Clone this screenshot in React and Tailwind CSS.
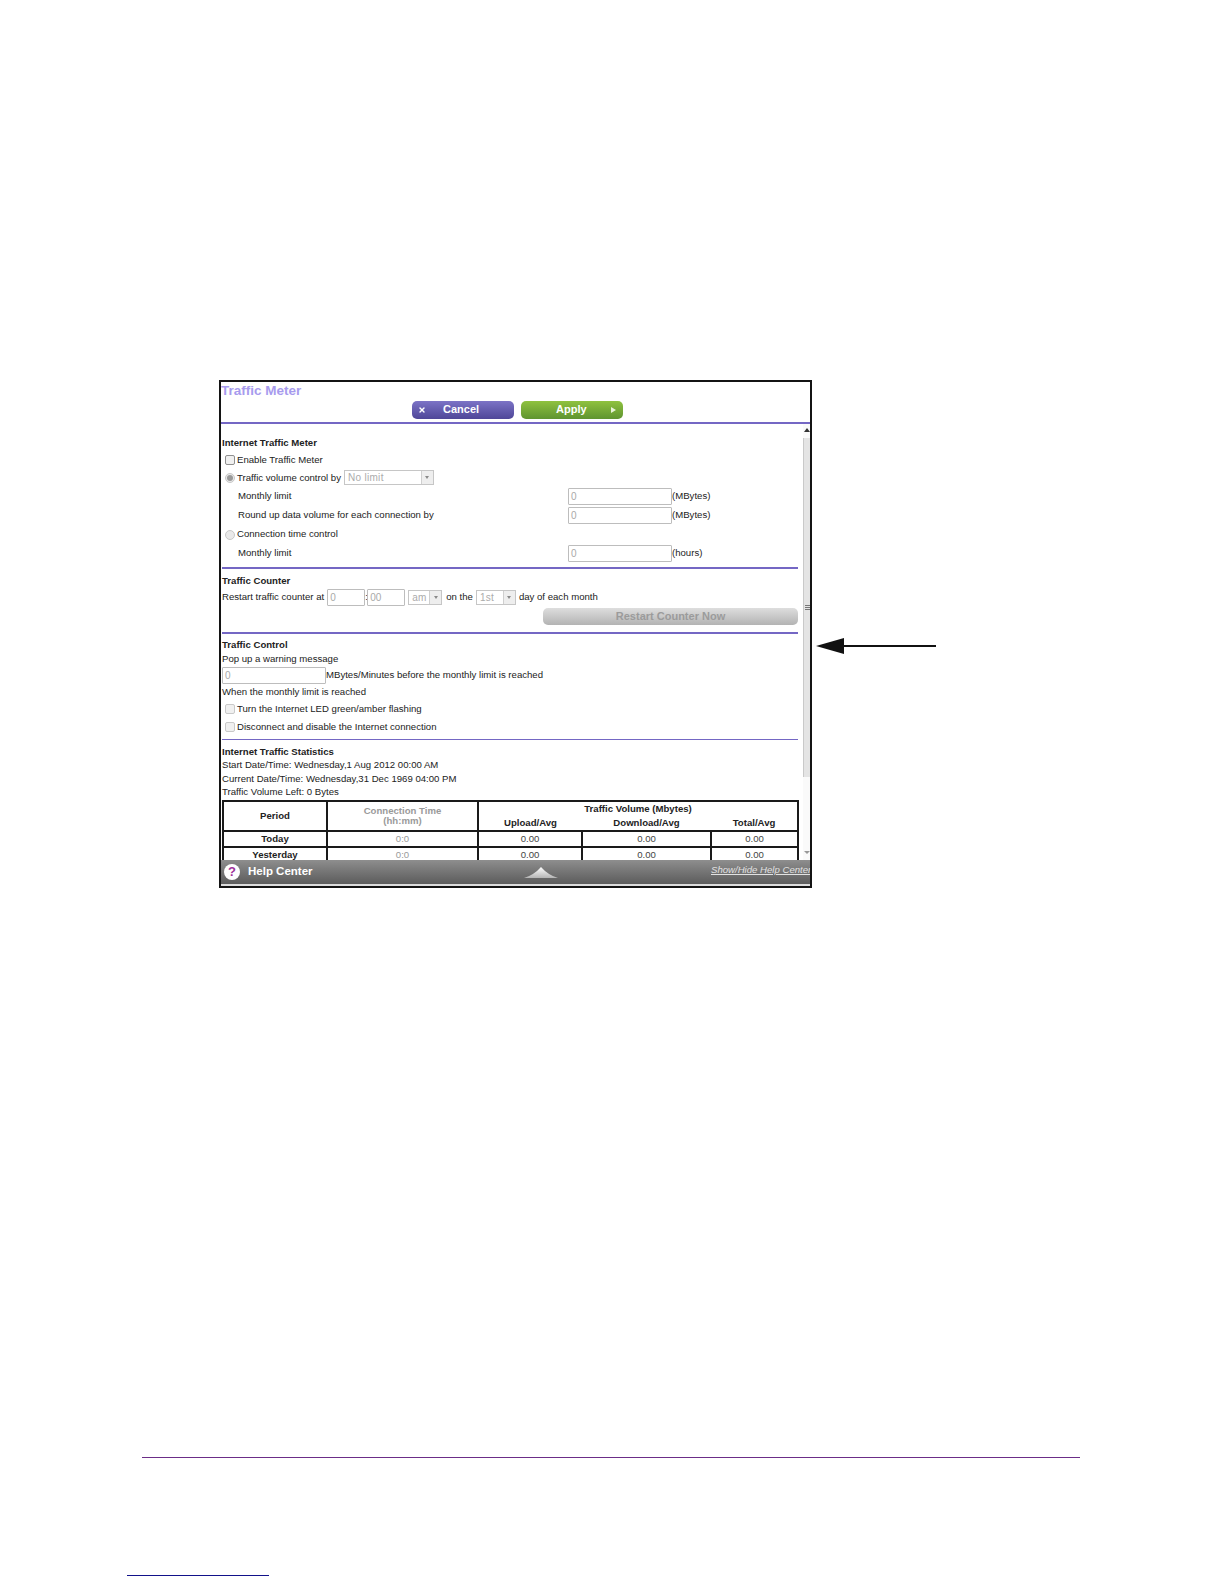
import React from "react";
import { X } from "lucide-react";

const font = "font-['Liberation_Sans',Arial,sans-serif]";

function Divider({ className = "h-[2px]" }) {
  return <div className={`bg-[#7467c4] mr-[5px] ${className}`} />;
}

function Check({ className = "border-[#c9c9c9]" }) {
  return <span className={`shrink-0 w-[10px] h-[10px] border rounded-[2px] bg-[#f0f0f0] ${className}`} />;
}

function Radio({ on }) {
  return (
    <span className="shrink-0 w-[10px] h-[10px] rounded-full border border-[#c8c8c8] bg-[#e9e9e9] flex items-center justify-center">
      {on && <span className="w-[6px] h-[6px] rounded-full bg-[#9a9a9a]" />}
    </span>
  );
}

function Field({ value = "0", className = "" }) {
  return (
    <span className={`shrink-0 h-[17px] border border-[#bdbdbd] rounded-[1px] pl-[2px] text-[10px] leading-[15px] text-[#a9a9a9] bg-white ${className}`}>
      {value}
    </span>
  );
}

function Select({ value, className = "" }) {
  return (
    <span className={`shrink-0 h-[15px] -mt-[1px] border border-[#c6c6c6] pl-[3px] flex items-center justify-between text-[10px] tracking-[0.3px] text-[#ababab] bg-white ${className}`}>
      {value}
      <span className="w-[12px] h-[13px] bg-[#eeeeee] border-l border-[#cfcfcf] flex items-center justify-center">
        <span className="border-x-[2.5px] border-x-transparent border-t-[3px] border-t-[#8a8a8a]" />
      </span>
    </span>
  );
}

function LimitRow({ label, unit, height }) {
  return (
    <div className={`flex items-center pl-[16px] ${height}`}>
      <span className="w-[330px]">{label}</span>
      <Field className="w-[104px]" />
      <span>{unit}</span>
    </div>
  );
}

function Cell({ children, className = "", ...props }) {
  return (
    <td {...props} className={`border-2 border-[#1a1a1a] p-0 text-center align-middle ${className}`}>
      {children}
    </td>
  );
}

function DataRow({ label }) {
  return (
    <tr className="h-[16px]">
      <Cell className="font-bold">{label}</Cell>
      <Cell className="text-[#9a9a9a]">0:0</Cell>
      <Cell className="text-[#444]">0.00</Cell>
      <Cell className="text-[#444]">0.00</Cell>
      <Cell className="text-[#444]">0.00</Cell>
    </tr>
  );
}

function Scrollbar() {
  return (
    <div className="w-[7px] shrink-0 flex flex-col items-center bg-[#fafafa]">
      <div className="h-[14px] w-full flex items-start justify-center pt-[4px]">
        <span className="border-x-[3px] border-x-transparent border-b-[4px] border-b-[#333]" />
      </div>
      <div className="w-full h-[339px] bg-[#e4e4e4] border-l border-[#c9c9c9] flex flex-col items-center justify-center gap-[1px]">
        <span className="w-[5px] h-px bg-[#777]" />
        <span className="w-[5px] h-px bg-[#777]" />
        <span className="w-[5px] h-px bg-[#777]" />
      </div>
      <div className="flex-1 w-full flex items-end justify-center pb-[6px]">
        <span className="border-x-[3px] border-x-transparent border-t-[3px] border-t-[#999]" />
      </div>
    </div>
  );
}

function Arrow() {
  return (
    <svg width="120" height="16" viewBox="0 0 120 16" className="shrink-0">
      <path d="M0 8 L28 0 V16 Z" fill="#111" />
      <rect x="27" y="7" width="93" height="2" fill="#111" />
    </svg>
  );
}

function Peak() {
  return (
    <svg width="34" height="11" viewBox="0 0 34 11" className="shrink-0">
      <defs>
        <linearGradient id="peak" x1="0" y1="0" x2="0" y2="1">
          <stop offset="0" stopColor="#ffffff" />
          <stop offset="1" stopColor="#b5b5b5" />
        </linearGradient>
      </defs>
      <path d="M0 11 Q10 8 17 0 Q24 8 34 11 Z" fill="url(#peak)" />
    </svg>
  );
}

export default function App() {
  return (
    <div className={`min-h-[1584px] overflow-hidden bg-white ${font} text-[#222]`}>
      <div className="flex items-start pl-[219px] pt-[380px]">
        <div className="w-[593px] h-[508px] shrink-0 border-2 border-[#141414] flex flex-col overflow-hidden bg-white">
          {/* header */}
          <div className="h-[40px] shrink-0">
            <div className="h-[19px] text-[13.5px] leading-[18px] font-bold text-[#a79bee]">Traffic Meter</div>
            <div className="flex gap-[7px] pl-[191px]">
              <button className="w-[102px] h-[18px] pb-[1px] rounded-[5px] bg-gradient-to-b from-[#7c73c6] to-[#4f4698] text-white text-[11px] font-bold flex items-center">
                <X size={8} strokeWidth={4} className="ml-[6px] mr-[17px]" />
                Cancel
              </button>
              <button className="w-[102px] h-[18px] pb-[1px] rounded-[5px] bg-gradient-to-b from-[#8fc23f] to-[#5f9430] text-white text-[11px] font-bold flex items-center">
                <span className="ml-[35px]">Apply</span>
                <span className="ml-[24px] border-y-[3.5px] border-y-transparent border-l-[5px] border-l-[#e8f3d8]" />
              </button>
            </div>
          </div>
          <div className="h-[2px] shrink-0 bg-[#7467c4]" />

          {/* scrolling body */}
          <div className="flex-1 min-h-0 flex">
            <div className="flex-1 min-w-0 pl-[1px] text-[9.6px] overflow-hidden">
              <div className="h-[11px]" />
              <div className="h-[16px] leading-[16px] font-bold">Internet Traffic Meter</div>
              <div className="h-[18px] flex items-center pl-[3px] gap-[2px]">
                <Check className="border-[#8f8f8f]" />
                <span>Enable Traffic Meter</span>
              </div>
              <div className="h-[18px] flex items-center pl-[3px] gap-[2px]">
                <Radio on />
                <span>Traffic volume control by</span>
                <Select value="No limit" className="w-[90px] ml-[1px]" />
              </div>
              <LimitRow label="Monthly limit" unit="(MBytes)" height="h-[19px]" />
              <LimitRow label="Round up data volume for each connection by" unit="(MBytes)" height="h-[19px]" />
              <div className="h-[19px] flex items-center pl-[3px] gap-[2px]">
                <Radio />
                <span>Connection time control</span>
              </div>
              <LimitRow label="Monthly limit" unit="(hours)" height="h-[18px]" />
              <div className="h-[5px]" />
              <Divider />

              <div className="h-[4px]" />
              <div className="h-[16px] leading-[16px] font-bold">Traffic Counter</div>
              <div className="h-[17px] flex items-center">
                <span>Restart traffic counter at</span>
                <Field className="w-[38px] ml-[3px]" />
                <span className="w-[2px]">:</span>
                <Field value="00" className="w-[38px]" />
                <Select value="am" className="w-[34px] ml-[3px]" />
                <span className="ml-[4px]">on the</span>
                <Select value="1st" className="w-[40px] ml-[3px]" />
                <span className="ml-[3px]">day of each month</span>
              </div>
              <div className="h-[2px]" />
              <div className="flex justify-end pr-[5px]">
                <div className="w-[255px] h-[17px] rounded-[5px] bg-gradient-to-b from-[#dedede] to-[#b3b3b3] text-center text-[11px] leading-[16px] font-bold text-[#9b9b9b]">
                  Restart Counter Now
                </div>
              </div>
              <div className="h-[7px]" />
              <Divider />

              <div className="h-[3px]" />
              <div className="h-[16px] leading-[16px] font-bold">Traffic Control</div>
              <div className="h-[12px] leading-[12px]">Pop up a warning message</div>
              <div className="h-[20px] flex items-center">
                <Field className="w-[104px]" />
                <span>MBytes/Minutes before the monthly limit is reached</span>
              </div>
              <div className="h-[14px] leading-[14px]">When the monthly limit is reached</div>
              <div className="h-[20px] flex items-center pl-[3px] gap-[2px]">
                <Check />
                <span>Turn the Internet LED green/amber flashing</span>
              </div>
              <div className="h-[16px] flex items-center pl-[3px] gap-[2px]">
                <Check />
                <span>Disconnect and disable the Internet connection</span>
              </div>
              <div className="h-[4px]" />
              <Divider className="h-[1px]" />

              <div className="h-[5px]" />
              <div className="h-[13px] leading-[13px] font-bold">Internet Traffic Statistics</div>
              <div className="h-[14px] leading-[14px]">Start Date/Time: Wednesday,1 Aug 2012 00:00 AM</div>
              <div className="h-[13px] leading-[13px]">Current Date/Time: Wednesday,31 Dec 1969 04:00 PM</div>
              <div className="h-[14px] leading-[14px]">Traffic Volume Left: 0 Bytes</div>

              <table className="w-[575px] table-fixed border-collapse mt-[1px] leading-[10.5px]">
                <colgroup>
                  <col className="w-[104px]" />
                  <col className="w-[151px]" />
                  <col className="w-[104px]" />
                  <col className="w-[129px]" />
                  <col className="w-[87px]" />
                </colgroup>
                <tbody>
                  <tr className="h-[15px]">
                    <Cell className="font-bold" rowSpan={2}>Period</Cell>
                    <Cell className="font-bold text-[#9a9a9a]" rowSpan={2}>
                      Connection Time
                      <br />
                      (hh:mm)
                    </Cell>
                    <td colSpan={3} className="border-x-2 border-t-2 border-[#1a1a1a] p-0 text-center font-bold">
                      Traffic Volume (Mbytes)
                    </td>
                  </tr>
                  <tr className="h-[15px]">
                    <td className="border-l-2 border-b-2 border-[#1a1a1a] p-0 text-center font-bold">Upload/Avg</td>
                    <td className="border-b-2 border-[#1a1a1a] p-0 text-center font-bold">Download/Avg</td>
                    <td className="border-r-2 border-b-2 border-[#1a1a1a] p-0 text-center font-bold">Total/Avg</td>
                  </tr>
                  <DataRow label="Today" />
                  <DataRow label="Yesterday" />
                </tbody>
              </table>
            </div>
            <Scrollbar />
          </div>

          {/* help bar */}
          <div className="h-[24px] shrink-0 bg-gradient-to-b from-[#8e8e8e] to-[#5c5c5c] flex items-center overflow-hidden">
            <span className="shrink-0 ml-[3px] w-[16px] h-[16px] rounded-full bg-white text-[#a0339b] text-[13px] font-bold flex items-center justify-center">?</span>
            <span className="shrink-0 ml-[8px] w-[66px] whitespace-nowrap text-white text-[11.5px] font-bold">Help Center</span>
            <span className="ml-[210px] mt-[1px] flex">
              <Peak />
            </span>
            <span className="shrink-0 ml-[153px] -mt-[4px] whitespace-nowrap text-[#e2e2e2] text-[9.6px] italic underline">Show/Hide Help Center</span>
          </div>
          <div className="h-[2px] shrink-0 bg-[#dcdcdc]" />
        </div>
        <div className="ml-[4px] mt-[258px]">
          <Arrow />
        </div>
      </div>
      <div className="ml-[142px] mt-[569px] w-[938px] h-[1px] bg-[#6b2d87]" />
      <div className="ml-[127px] mt-[117px] w-[142px] h-[1px] bg-[#12128a]" />
    </div>
  );
}
